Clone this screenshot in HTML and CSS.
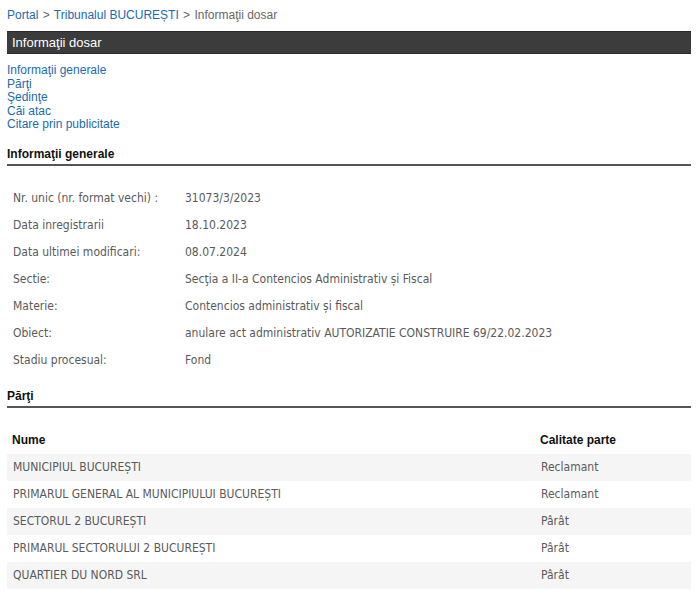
FILE: index.html
```html
<!DOCTYPE html>
<html lang="ro">
<head>
    <meta charset="UTF-8">
    <title>Informaţii dosar</title>
    <link rel="stylesheet" href="styles.css">
</head>
<body>
    <div class="breadcrumb">
        <a href="#">Portal</a> <span class="sep">&gt;</span> <a href="#">Tribunalul BUCUREȘTI</a> <span class="sep">&gt;</span> <span class="current">Informaţii dosar</span>
    </div>
    <div class="title-bar">Informaţii dosar</div>
    <div class="nav-links">
        <a href="#generale">Informaţii generale</a>
        <a href="#parti">Părţi</a>
        <a href="#sedinte">Şedinţe</a>
        <a href="#cai">Căi atac</a>
        <a href="#citare">Citare prin publicitate</a>
    </div>

    <h2 class="section-title" id="generale">Informaţii generale</h2>
    <table class="info-table">
        <tr><td class="label">Nr. unic (nr. format vechi) :</td><td>31073/3/2023</td></tr>
        <tr><td class="label">Data inregistrarii</td><td>18.10.2023</td></tr>
        <tr><td class="label">Data ultimei modificari:</td><td>08.07.2024</td></tr>
        <tr><td class="label">Sectie:</td><td>Secţia a II-a Contencios Administrativ și Fiscal</td></tr>
        <tr><td class="label">Materie:</td><td>Contencios administrativ și fiscal</td></tr>
        <tr><td class="label">Obiect:</td><td>anulare act administrativ AUTORIZATIE CONSTRUIRE 69/22.02.2023</td></tr>
        <tr><td class="label">Stadiu procesual:</td><td>Fond</td></tr>
    </table>

    <h2 class="section-title" id="parti">Părţi</h2>
    <table class="parti-table">
        <thead>
            <tr><th>Nume</th><th class="col-calitate">Calitate parte</th></tr>
        </thead>
        <tbody>
            <tr><td>MUNICIPIUL BUCUREȘTI</td><td>Reclamant</td></tr>
            <tr><td>PRIMARUL GENERAL AL MUNICIPIULUI BUCUREȘTI</td><td>Reclamant</td></tr>
            <tr><td>SECTORUL 2 BUCUREȘTI</td><td>Pârât</td></tr>
            <tr><td>PRIMARUL SECTORULUI 2 BUCUREȘTI</td><td>Pârât</td></tr>
            <tr><td>QUARTIER DU NORD SRL</td><td>Pârât</td></tr>
        </tbody>
    </table>
</body>
</html>
```

FILE: styles.css
```css
body {
    font-family: 'Liberation Sans', Arial, sans-serif;
    font-size: 12px;
    color: #555;
    margin: 0;
    padding: 0 9px 0 7px;
    background: #fff;
}
a {
    color: #1a6bb0;
    text-decoration: none;
}
.breadcrumb {
    font-size: 12px;
    padding-top: 8px;
    height: 23px;
    color: #666;
}
.breadcrumb .sep {
    margin: 0 1px;
}
.title-bar {
    background-color: #3c3c3c;
    border-top: 1px solid #2a2a2a;
    border-bottom: 1px solid #2a2a2a;
    color: #fff;
    font-size: 13px;
    height: 21px;
    line-height: 21px;
    padding-left: 5px;
}
.nav-links {
    margin-top: 10px;
}
.nav-links a {
    display: block;
    line-height: 13.5px;
}
.section-title {
    font-size: 12px;
    font-weight: bold;
    color: #111;
    margin: 15px 0 0 0;
    padding-bottom: 3px;
    border-bottom: 2px solid #555;
}
table {
    border-collapse: collapse;
    width: 100%;
    font-family: 'DejaVu Sans Condensed', 'DejaVu Sans', sans-serif;
    font-size: 12px;
}
.info-table {
    margin-top: 19px;
    margin-bottom: 1px;
}
.info-table td {
    height: 27px;
    padding: 0 6px;
    color: #5a5a5a;
}
.info-table td.label {
    width: 160px;
}
.parti-table {
    margin-top: 19px;
}
.parti-table th {
    font-family: 'Liberation Sans', Arial, sans-serif;
    text-align: left;
    height: 27px;
    padding: 0 5px;
    color: #111;
    font-weight: bold;
}
.parti-table th.col-calitate {
    width: 146px;
}
.parti-table td {
    height: 27px;
    padding: 0 6px;
    color: #5a5a5a;
}
.parti-table tbody tr:nth-child(odd) {
    background-color: #f5f5f5;
}
```
